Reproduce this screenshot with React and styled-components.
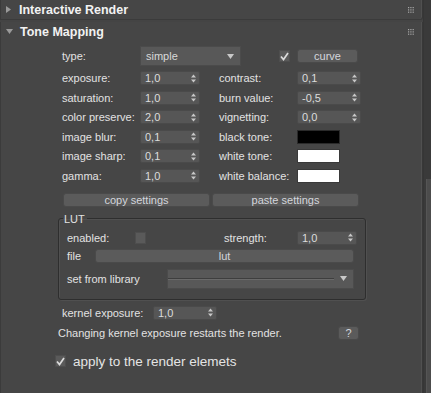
import React from "react";
import styled, { createGlobalStyle } from "styled-components";

const Global = createGlobalStyle`
  html, body { margin: 0; padding: 0; background: #464646; overflow: hidden; }
  body { font-family: "Liberation Sans", Arial, sans-serif; font-size: 11px; color: #dedede; }
  * { box-sizing: border-box; }
`;

const Page = styled.div`
  display: flex;
  align-items: flex-start;
  width: 431px;
  height: 393px;
  overflow: hidden;
  background: #444444;
`;

const Main = styled.div`
  width: 423px;
  height: 440px;
  flex: none;
  display: flex;
  flex-direction: column;
  gap: 2px;
`;

const Scroll = styled.div`
  flex: 1;
  align-self: stretch;
  display: flex;
  flex-direction: column;
  background: #3a3a3a;
  border-left: 1px solid #363636;
  padding-left: 2px;
  padding-top: 179px;
`;

const Thumb = styled.div`
  flex: 1;
  background: #4c4c4c;
  border-left: 1px solid #555;
`;

const Rollout = styled.div`
  background: #464646;
  border: 1px solid #3b3b3b;
  border-top: none;
  border-right-color: #383838;
  border-radius: 0 0 3px 0;
  display: flex;
  flex-direction: column;
  flex: ${(p) => (p.$tall ? 1 : "none")};
  box-shadow: inset -1px 0 0 #505050;
`;

const Header = styled.div`
  height: 19px;
  display: flex;
  align-items: center;
  padding-left: 5px;
  padding-right: 8px;
  gap: 7px;
  font-weight: bold;
  font-size: 12.5px;
  color: #f2f2f2;
`;

const HeaderTitle = styled.span`
  flex: 1;
`;

const Body = styled.div`
  display: flex;
  flex-direction: column;
  padding: 5px 0 0 61px;
`;

const TypeRow = styled.div`
  display: grid;
  grid-template-columns: 78px 101px 38px 18px 61px;
  align-items: center;
  height: 20px;
`;

const Params = styled.div`
  margin-top: 5px;
  display: grid;
  grid-template-columns: 78px 60px 19px 78px 64px;
  grid-auto-rows: 14px;
  row-gap: 5.6px;
  align-items: center;
`;

const Label = styled.span`
  white-space: nowrap;
  color: #e2e2e2;
  line-height: 14px;
  grid-column: ${(p) => p.$col || "auto"};
`;

const Field = styled.div`
  height: 14px;
  background: #565656;
  border: 1px solid #4a4a4a;
  border-radius: 2px;
  display: flex;
  align-items: center;
  padding: 0 3px 0 4px;
  color: #dcdcdc;
  grid-column: ${(p) => p.$col || "auto"};
  width: ${(p) => (p.$w ? p.$w + "px" : "auto")};
`;

const FieldValue = styled.span`
  flex: 1;
  line-height: 12px;
`;

const Select = styled.div`
  height: ${(p) => p.$h || 20}px;
  width: ${(p) => (p.$w ? p.$w + "px" : "auto")};
  background: #585858;
  border: 1px solid #4b4b4b;
  display: flex;
  align-items: center;
  padding: 0 6px 0 5px;
  color: #d8d8d8;
  gap: 6px;
`;

const SelectText = styled.span`
  flex: 1;
`;

const SelectLine = styled.div`
  flex: 1;
  height: 1px;
  background: #3e3e3e;
  box-shadow: 0 1px 0 #6a6a6a;
  margin-left: -5px;
`;

const Check = styled.div`
  width: 11px;
  height: 12px;
  background: #5a5a5a;
  border: 1px solid #4e4e4e;
  display: flex;
  align-items: center;
  justify-content: center;
`;

const Button = styled.div`
  height: ${(p) => p.$h || 14}px;
  background: #5b5b5b;
  border: 1px solid #4a4a4a;
  border-radius: 3px;
  display: flex;
  align-items: center;
  justify-content: center;
  color: #d4d6dc;
  font-size: 11px;
  width: ${(p) => (p.$w ? p.$w + "px" : "auto")};
  flex: ${(p) => (p.$grow ? 1 : "none")};
`;

const Swatch = styled.div`
  height: 14px;
  width: 43px;
  background: ${(p) => p.$c};
  border: 1px solid ${(p) => (p.$c === "#000" ? "#2a2a2a" : "#3a3a3a")};
`;

const ButtonRow = styled.div`
  display: flex;
  gap: 2px;
  margin: 10px 0 0 1px;
  width: 296px;
`;

const Group = styled.fieldset`
  margin: 6px 0 0 -4px;
  width: 305px;
  height: 87px;
  border: 1px solid #2e2e2e;
  box-shadow: inset 1px 1px 0 #505050, 1px 1px 0 #505050;
  border-radius: 3px;
  padding: 5px 8px 0 8px;
  display: flex;
  flex-direction: column;
  gap: 4px;
`;

const Legend = styled.legend`
  padding: 0 2px 0 1px;
  margin-left: -4px;
  color: #e2e2e2;
  font-size: 11px;
  line-height: 12px;
`;

const GroupRow = styled.div`
  display: flex;
  align-items: center;
  height: ${(p) => p.$h || 14}px;
  margin-top: ${(p) => p.$mt || 0}px;
`;

const Cell = styled.div`
  width: ${(p) => p.$w}px;
  flex: none;
  display: flex;
  align-items: center;
`;

const KernelRow = styled.div`
  display: flex;
  align-items: center;
  margin-top: 6px;
  height: 14px;
`;

const InfoRow = styled.div`
  display: flex;
  align-items: center;
  justify-content: space-between;
  margin: 6px 0 0 -4px;
  width: 301px;
  height: 14px;
`;

const ApplyRow = styled.div`
  display: flex;
  align-items: center;
  gap: 7px;
  margin: 14px 0 0 -7px;
  font-size: 13.5px;
  color: #e4e4e4;
`;

const Arrows = () => (
  <svg width="5" height="9" viewBox="0 0 5 9">
    <path d="M0 3.5 L2.5 0.5 L5 3.5 Z" fill="#c8c8c8" />
    <path d="M0 5.5 L2.5 8.5 L5 5.5 Z" fill="#c8c8c8" />
  </svg>
);

const Down = ({ c = "#c8c8c8" }) => (
  <svg width="7" height="5" viewBox="0 0 7 5">
    <path d="M0 0 L7 0 L3.5 5 Z" fill={c} />
  </svg>
);

const Right = () => (
  <svg width="6" height="7" viewBox="0 0 6 7">
    <path d="M0 0 L5 3.5 L0 7 Z" fill="#9a9a9a" />
  </svg>
);

const Grip = () => (
  <svg width="6" height="6" viewBox="0 0 6 6">
    {[0, 2.3, 4.6].map((x) =>
      [0, 2.3, 4.6].map((y) => (
        <rect key={x + "-" + y} x={x} y={y} width="1.2" height="1.2" fill="#a8a8a8" />
      ))
    )}
  </svg>
);

const Tick = () => (
  <svg width="9" height="9" viewBox="0 0 9 9">
    <path d="M1 4.5 L3.5 7.5 L8 1" fill="none" stroke="#dcdcdc" strokeWidth="1.7" />
  </svg>
);

const Spin = ({ v, col, w }) => (
  <Field $col={col} $w={w}>
    <FieldValue>{v}</FieldValue>
    <Arrows />
  </Field>
);

const params = [
  ["exposure:", "1,0", "contrast:", { v: "0,1" }],
  ["saturation:", "1,0", "burn value:", { v: "-0,5" }],
  ["color preserve:", "2,0", "vignetting:", { v: "0,0" }],
  ["image blur:", "0,1", "black tone:", { c: "#000" }],
  ["image sharp:", "0,1", "white tone:", { c: "#fff" }],
  ["gamma:", "1,0", "white balance:", { c: "#fff" }],
];

export default function App() {
  return (
    <Page>
      <Global />
      <Main>
        <Rollout>
          <Header>
            <Right />
            <HeaderTitle>Interactive Render</HeaderTitle>
            <Grip />
          </Header>
        </Rollout>
        <Rollout $tall>
          <Header>
            <Down c="#9a9a9a" />
            <HeaderTitle>Tone Mapping</HeaderTitle>
            <Grip />
          </Header>
          <Body>
            <TypeRow>
              <Label>type:</Label>
              <Select>
                <SelectText>simple</SelectText>
                <Down />
              </Select>
              <span />
              <Check>
                <Tick />
              </Check>
              <Button>curve</Button>
            </TypeRow>
            <Params>
              {params.map(([l1, v1, l2, r]) => (
                <React.Fragment key={l1}>
                  <Label>{l1}</Label>
                  <Spin v={v1} />
                  <Label $col="4">{l2}</Label>
                  {r.v ? <Spin v={r.v} /> : <Swatch $c={r.c} />}
                </React.Fragment>
              ))}
            </Params>
            <ButtonRow>
              <Button $grow>copy settings</Button>
              <Button $grow>paste settings</Button>
            </ButtonRow>
            <Group>
              <Legend>LUT</Legend>
              <GroupRow $mt={1}>
                <Cell $w={68}>
                  <Label>enabled:</Label>
                </Cell>
                <Cell $w={89}>
                  <Check />
                </Cell>
                <Cell $w={73}>
                  <Label>strength:</Label>
                </Cell>
                <Spin v="1,0" w={60} />
              </GroupRow>
              <GroupRow>
                <Cell $w={28}>
                  <Label>file</Label>
                </Cell>
                <Button $w={259}>lut</Button>
              </GroupRow>
              <GroupRow $h={20} $mt={2}>
                <Cell $w={100}>
                  <Label>set from library</Label>
                </Cell>
                <Select $w={187}>
                  <SelectLine />
                  <Down />
                </Select>
              </GroupRow>
            </Group>
            <KernelRow>
              <Cell $w={91}>
                <Label>kernel exposure:</Label>
              </Cell>
              <Spin v="1,0" w={64} />
            </KernelRow>
            <InfoRow>
              <Label>Changing kernel exposure restarts the render.</Label>
              <Button $w={21}>?</Button>
            </InfoRow>
            <ApplyRow>
              <Check>
                <Tick />
              </Check>
              <span>apply to the render elemets</span>
            </ApplyRow>
          </Body>
        </Rollout>
      </Main>
      <Scroll>
        <Thumb />
      </Scroll>
    </Page>
  );
}
